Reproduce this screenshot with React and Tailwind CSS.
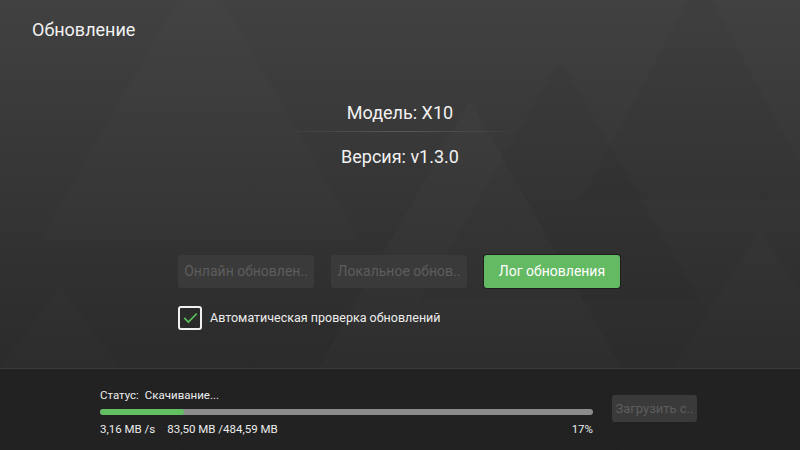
import { Check } from 'lucide-react'

const font = { fontFamily: 'Roboto, "Noto Sans", sans-serif' }

const Backdrop = () => (
  <svg className="absolute inset-0 pointer-events-none" width="800" height="450" viewBox="0 0 800 450">
    <polygon points="200,-40 360,240 40,240" fill="#ffffff" opacity="0.01" />
    <polygon points="470,100 640,400 300,400" fill="#ffffff" opacity="0.015" />
    <polygon points="60,285 180,450 -60,450" fill="#ffffff" opacity="0.01" />
    <polygon points="760,230 900,450 620,450" fill="#ffffff" opacity="0.012" />
    <polygon points="560,60 700,300 420,300" fill="#000000" opacity="0.03" />
    <polygon points="295,370 360,450 230,450" fill="#ffffff" opacity="0.012" />
    <polygon points="700,-20 820,200 580,200" fill="#000000" opacity="0.03" />
  </svg>
)

const GreyButton = ({ children, className = '' }) => (
  <div
    className={`flex items-center justify-center overflow-hidden whitespace-nowrap rounded-[3px] bg-[#3a3a3a] text-[#5d5d5d] ${className}`}
  >
    {children}
  </div>
)

export default function App() {
  return (
    <div
      className="relative w-[800px] h-[450px] overflow-hidden bg-gradient-to-b from-[#414141] to-[#262626] text-white"
      style={font}
    >
      <Backdrop />
      <div className="relative flex flex-col h-full">
        <div className="pl-[32px] pt-[17px] text-[18px] leading-[26px] text-[#f2f2f2]">Обновление</div>

        <div className="flex flex-col items-center">
          <div className="mt-[57px] text-[18px] leading-[26px] text-[#f2f2f2]">Модель: X10</div>
          <div className="mt-[5px] h-px w-[240px] bg-gradient-to-r from-transparent via-[#5a5a5a] to-transparent" />
          <div className="mt-[12px] text-[18px] leading-[26px] text-[#f2f2f2]">Версия: v1.3.0</div>
        </div>

        <div className="ml-[178px] mt-[85px]">
          <div className="flex gap-[17px]">
            <GreyButton className="w-[136px] h-[33px] text-[14px]">Онлайн обновлен..</GreyButton>
            <GreyButton className="w-[136px] h-[33px] text-[14px]">Локальное обнов..</GreyButton>
            <div className="flex items-center justify-center w-[136px] h-[33px] rounded-[3px] bg-[#64b963] text-[14px] text-white shadow-[0_0_0_1px_#1e1e1e]">
              Лог обновления
            </div>
          </div>
          <div className="flex items-center gap-[8px] mt-[17px] h-[26px]">
            <div className="flex items-center justify-center w-[24px] h-[24px] rounded-[3px] border-2 border-[#f0f0f0] bg-[#2a2a2a]">
              <Check size={17} strokeWidth={2.4} strokeLinecap="square" strokeLinejoin="miter" className="text-[#5bc05b]" />
            </div>
            <span className="text-[12.5px] text-[#ededed]">Автоматическая проверка обновлений</span>
          </div>
        </div>

        <div className="mt-auto h-[82px] border-t border-[#3a3a3a] bg-[#212121]/90 flex">
          <div className="ml-[100px] w-[493px] pt-[18px]">
            <div className="text-[11.5px] leading-[16px] text-[#ededed]">
              Статус:<span className="ml-[6px]">Скачивание...</span>
            </div>
            <div className="mt-[6px] h-[6px] w-full rounded-full bg-[#8c8c8c] overflow-hidden">
              <div className="h-full rounded-full bg-[#62c062]" style={{ width: '17%' }} />
            </div>
            <div className="mt-[6px] flex text-[11.5px] leading-[16px] text-[#ededed]">
              <span>3,16 MB /s</span>
              <span className="ml-[12px]">83,50 MB /484,59 MB</span>
              <span className="ml-auto">17%</span>
            </div>
          </div>
          <GreyButton className="ml-[19px] mt-[26px] w-[85px] h-[27px] text-[13px]">Загрузить с..</GreyButton>
        </div>
      </div>
    </div>
  )
}
